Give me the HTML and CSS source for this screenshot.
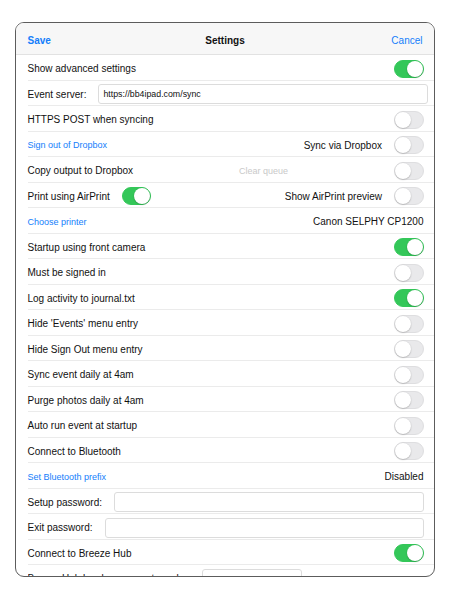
FILE: index.html
```html
<!DOCTYPE html>
<html>
<head>
<meta charset="utf-8">
<link rel="stylesheet" href="styles.css">
</head>
<body>
<div class="frame">
  <div class="header">
    <span class="btn save">Save</span>
    <span class="title">Settings</span>
    <span class="btn cancel">Cancel</span>
  </div>
  <div class="row"><span class="label">Show advanced settings</span><span class="fill"></span><span class="toggle on"></span></div>
  <div class="row"><span class="label">Event server:</span><input class="field wide" value="https://bb4ipad.com/sync"></div>
  <div class="row"><span class="label">HTTPS POST when syncing</span><span class="fill"></span><span class="toggle"></span></div>
  <div class="row"><span class="link">Sign out of Dropbox</span><span class="fill"></span><span class="label">Sync via Dropbox</span><span class="toggle"></span></div>
  <div class="row"><span class="label">Copy output to Dropbox</span><span class="fill center"><span class="disabled">Clear queue</span></span><span class="toggle"></span></div>
  <div class="row"><span class="label">Print using AirPrint</span><span class="toggle on"></span><span class="fill"></span><span class="label">Show AirPrint preview</span><span class="toggle"></span></div>
  <div class="row"><span class="link">Choose printer</span><span class="fill"></span><span class="value">Canon SELPHY CP1200</span></div>
  <div class="row"><span class="label">Startup using front camera</span><span class="fill"></span><span class="toggle on"></span></div>
  <div class="row"><span class="label">Must be signed in</span><span class="fill"></span><span class="toggle"></span></div>
  <div class="row"><span class="label">Log activity to journal.txt</span><span class="fill"></span><span class="toggle on"></span></div>
  <div class="row"><span class="label">Hide 'Events' menu entry</span><span class="fill"></span><span class="toggle"></span></div>
  <div class="row"><span class="label">Hide Sign Out menu entry</span><span class="fill"></span><span class="toggle"></span></div>
  <div class="row"><span class="label">Sync event daily at 4am</span><span class="fill"></span><span class="toggle"></span></div>
  <div class="row"><span class="label">Purge photos daily at 4am</span><span class="fill"></span><span class="toggle"></span></div>
  <div class="row"><span class="label">Auto run event at startup</span><span class="fill"></span><span class="toggle"></span></div>
  <div class="row"><span class="label">Connect to Bluetooth</span><span class="fill"></span><span class="toggle"></span></div>
  <div class="row"><span class="link">Set Bluetooth prefix</span><span class="fill"></span><span class="value">Disabled</span></div>
  <div class="row"><span class="label">Setup password:</span><input class="field" value=""></div>
  <div class="row"><span class="label">Exit password:</span><input class="field" value=""></div>
  <div class="row"><span class="label">Connect to Breeze Hub</span><span class="fill"></span><span class="toggle on"></span></div>
  <div class="row"><span class="label last-label">Breeze Hub local server port number:</span><input class="field short" value="5000"></div>
</div>
</body>
</html>
```
FILE: styles.css
```css
* { box-sizing: border-box; }
body {
  margin: 0;
  background: #fff;
  font-family: "Liberation Sans", Arial, sans-serif;
  color: #111;
}
.frame {
  margin: 22px 0 0 15px;
  width: 420px;
  height: 555px;
  border: 1.5px solid #5c5c5c;
  border-radius: 9px;
  overflow: hidden;
  background: #fff;
}
.header {
  height: 32px;
  background: #f7f7f7;
  border-bottom: 1px solid #e2e2e2;
  display: grid;
  grid-template-columns: 1fr auto 1fr;
  align-items: center;
  padding: 3px 11.5px 0 11.5px;
  font-size: 10px;
}
.btn { color: #147efb; }
.save { font-weight: bold; justify-self: start; }
.cancel { justify-self: end; }
.title { font-weight: bold; color: #111; }
.row {
  height: 25.5px;
  margin-left: 11.5px;
  padding: 3px 10.5px 0 0;
  border-bottom: 1px solid #ebebeb;
  display: flex;
  align-items: center;
  gap: 12px;
  font-size: 10px;
  white-space: nowrap;
}
.fill { flex: 1; }
.center { display: flex; justify-content: center; }
.link { color: #147efb; font-size: 9px; }
.disabled { color: #c9c9c9; font-size: 9px; }
.value { color: #111; }
.last-label { width: 162px; overflow: hidden; }
.toggle {
  flex: none;
  width: 29.5px;
  height: 18px;
  border-radius: 9px;
  background: #e9e9eb;
  border: 1px solid #dedee0;
  display: flex;
  align-items: center;
  padding: 0;
}
.toggle::after {
  content: "";
  width: 16px;
  height: 16px;
  border-radius: 50%;
  background: #fff;
  box-shadow: 0 0.5px 1.5px rgba(0,0,0,0.3);
}
.toggle.on {
  background: #34c759;
  border-color: #34c759;
  justify-content: flex-end;
}
.field {
  flex: 1;
  min-width: 0;
  height: 20px;
  border: 1px solid #dcdcdc;
  border-radius: 3px;
  font-family: "Liberation Sans", Arial, sans-serif;
  font-size: 8.8px;
  color: #111;
  padding: 0 4px;
  outline: none;
  background: #fff;
}
.field.wide { margin-right: -4px; }
.field.short { flex: none; width: 100px; }
```
